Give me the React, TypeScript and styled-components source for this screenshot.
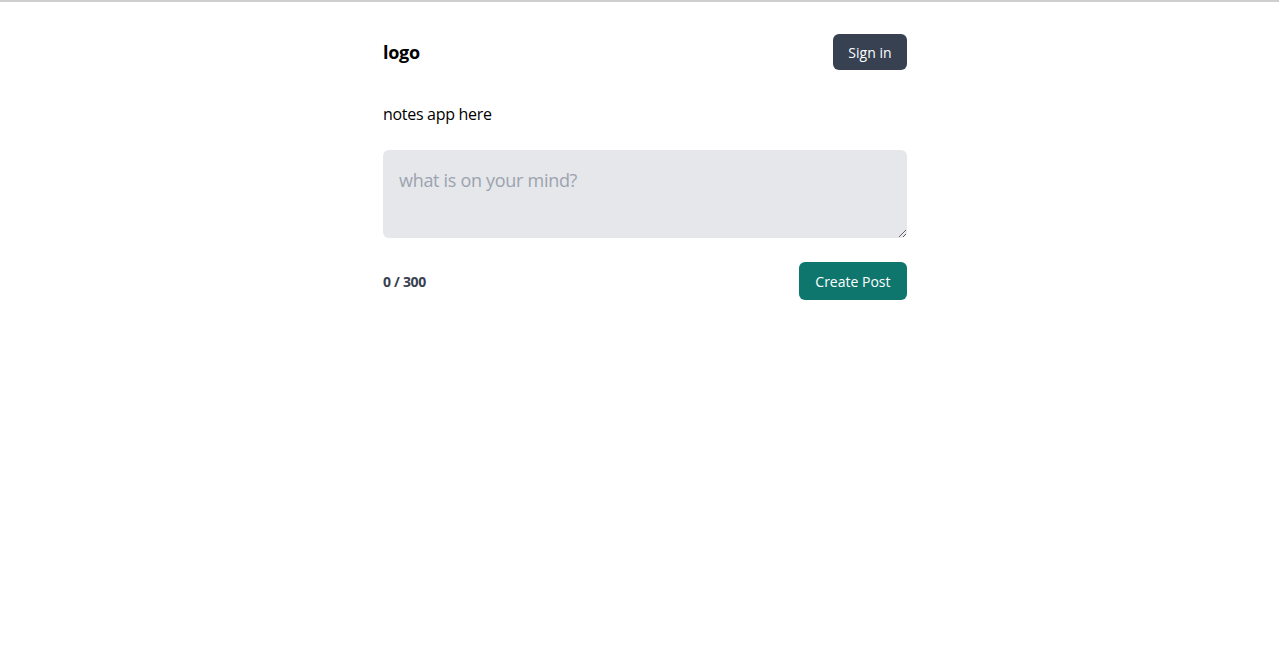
import React, { useState } from 'react'
import styled, { createGlobalStyle } from 'styled-components'

const GlobalStyle = createGlobalStyle`
  html, body {
    margin: 0;
    padding: 0;
    background: #ffffff;
  }
  body {
    border-top: 2px solid #cfcfcf;
    font-family: "Open Sans", "Noto Sans", sans-serif;
    color: #000000;
  }
  * {
    box-sizing: border-box;
  }
`

const Page = styled.div`
  display: flex;
  justify-content: center;
  padding-left: 11px;
`

const Container = styled.main`
  width: 524px;
  display: flex;
  flex-direction: column;
`

const Header = styled.header`
  display: flex;
  align-items: center;
  justify-content: space-between;
  padding-top: 32px;
`

const Logo = styled.div`
  font-size: 18px;
  font-weight: 700;
  letter-spacing: -0.3px;
`

const Button = styled.button<{ $tone: 'dark' | 'teal' }>`
  border: none;
  border-radius: 6px;
  color: #ffffff;
  font-family: inherit;
  font-size: 14px;
  cursor: pointer;
  background: ${(p) => (p.$tone === 'dark' ? '#374151' : '#0f766e')};
  height: ${(p) => (p.$tone === 'dark' ? '36px' : '38px')};
  padding: ${(p) => (p.$tone === 'dark' ? '0 15.5px' : '0 16.5px')};
`

const Intro = styled.p`
  margin: 32px 0 0;
  font-size: 16px;
  line-height: 24px;
  letter-spacing: -0.3px;
`

const Form = styled.form`
  display: flex;
  flex-direction: column;
  margin-top: 24px;
`

const NoteInput = styled.textarea`
  width: 100%;
  height: 88px;
  border: none;
  border-radius: 6px;
  background: #e5e7eb;
  padding: 16px;
  font-family: inherit;
  font-size: 18px;
  line-height: 28px;
  color: #111827;
  outline: none;
  resize: vertical;
  display: block;
  &::placeholder {
    color: #9ca3af;
    letter-spacing: -0.3px;
  }
`

const Footer = styled.div`
  display: flex;
  align-items: center;
  justify-content: space-between;
  margin-top: 24px;
`

const Counter = styled.span`
  font-size: 14px;
  font-weight: 700;
  color: #374151;
  letter-spacing: -0.3px;
`

export default function App() {
  const [text, setText] = useState('')

  return (
    <>
      <GlobalStyle />
      <Page>
        <Container>
          <Header>
            <Logo>logo</Logo>
            <Button $tone="dark" type="button">Sign in</Button>
          </Header>
          <Intro>notes app here</Intro>
          <Form onSubmit={(e) => e.preventDefault()}>
            <NoteInput
              placeholder="what is on your mind?"
              value={text}
              maxLength={300}
              onChange={(e) => setText(e.target.value)}
            />
            <Footer>
              <Counter>{text.length} / 300</Counter>
              <Button $tone="teal" type="submit">Create Post</Button>
            </Footer>
          </Form>
        </Container>
      </Page>
    </>
  )
}
